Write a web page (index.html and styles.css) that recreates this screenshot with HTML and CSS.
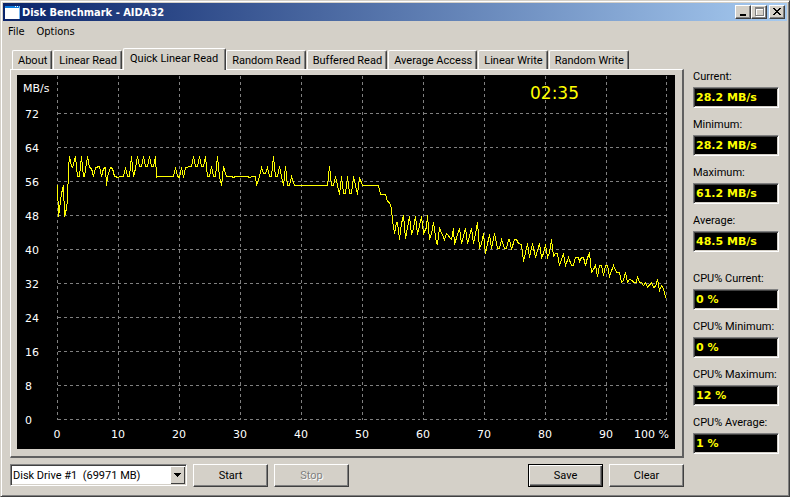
FILE: index.html
```
<!DOCTYPE html>
<html lang="en">
<head>
    <meta charset="UTF-8">
    <meta name="viewport" content="width=device-width, initial-scale=1.0">
    <title>Disk Benchmark - AIDA32</title>
    <link rel="stylesheet" href="styles.css">
</head>
<body>
    <div class="window">
        <header class="titlebar">
            <svg class="app-icon" width="15" height="13" viewBox="0 0 15 13" shape-rendering="crispEdges">
                <rect width="15" height="13" fill="#fff"/>
                <rect width="15" height="2" fill="#0a7be0"/>
                <rect x="10" width="1" height="1" fill="#fff"/>
                <rect x="12" width="1" height="1" fill="#fff"/>
                <rect x="14" width="1" height="13" fill="#7ab8f0"/>
            </svg>
            <h1>Disk Benchmark - AIDA32</h1>
            <div class="window-buttons">
                <button type="button" aria-label="Minimize">
                    <svg width="12" height="10" viewBox="0 0 12 10" shape-rendering="crispEdges">
                        <rect x="3" y="7" width="6" height="2" fill="#000"/>
                    </svg>
                </button>
                <button type="button" aria-label="Maximize" disabled>
                    <svg width="12" height="10" viewBox="0 0 12 10" shape-rendering="crispEdges">
                        <path d="M3 1h9v9H3zM4 3v6h7V3z" fill="#fff" fill-rule="evenodd"/>
                        <path d="M2 0h9v9H2zM3 2v6h7V2z" fill="#808080" fill-rule="evenodd"/>
                    </svg>
                </button>
                <button type="button" class="close" aria-label="Close">
                    <svg width="12" height="10" viewBox="0 0 12 10" shape-rendering="crispEdges">
                        <path d="M2 1h2v1h1v1h2V2h1V1h2v1H9v1H8v1H7v1h1v1h1v1h1v1H8V7H7V6H5v1H4v1H2V7h1V6h1V5h1V4H4V3H3V2H2z" fill="#000"/>
                    </svg>
                </button>
            </div>
        </header>

        <nav class="menu">
            <a href="#">File</a>
            <a href="#">Options</a>
        </nav>

        <div class="content">
            <main>
                <div class="tabs" role="tablist">
                    <button type="button" role="tab">About</button>
                    <button type="button" role="tab">Linear Read</button>
                    <button type="button" role="tab" class="active" aria-selected="true">Quick Linear Read</button>
                    <button type="button" role="tab">Random Read</button>
                    <button type="button" role="tab">Buffered Read</button>
                    <button type="button" role="tab">Average Access</button>
                    <button type="button" role="tab">Linear Write</button>
                    <button type="button" role="tab">Random Write</button>
                </div>

                <div class="panel">
                    <svg class="chart" viewBox="17 75 658 374">
                        <!-- Grid -->
                        <path class="grid" transform="translate(.5 .5)" d="
                            M57 75V419 M118 75V419 M179 75V419 M240 75V419 M301 75V419 M362 75V419
                            M423 75V419 M484 75V419 M545 75V419 M606 75V419 M666 75V419
                            M57 113H666 M57 147H666 M57 181H666 M57 215H666 M57 249H666
                            M57 283H666 M57 317H666 M57 351H666 M57 385H666 M57 419H666"/>

                        <!-- Transfer rate -->
                        <polyline class="rate" transform="translate(.5 .5)" points="
                            57,185 58,216 61,193 63,185 64,216 66,208 67,200 68,168 69,156 71,166 72,167 75,156
                            77,176 79,176 81,156 83,176 84,176 87,156 89,167 91,168 93,176 95,167 99,166 101,176
                            103,168 105,167 106,185 107,176 110,167 112,168 114,176 118,177 119,176 123,176
                            125,167 127,176 129,176 131,156 133,176 135,168 137,156 139,166 141,166 143,156
                            145,166 147,166 149,156 151,166 153,166 155,156 156,177 157,176 173,176 175,167
                            177,176 179,177 181,167 183,177 185,167 191,166 193,156 195,166 197,166 199,156
                            201,166 203,166 205,156 207,176 209,176 211,166 213,176 215,176 217,156 219,176
                            221,185 223,166 226,176 231,176 233,177 235,176 247,176 249,177 252,176 255,176
                            256,185 259,176 261,167 263,173 265,173 267,167 269,176 271,176 273,156 275,176
                            277,176 279,166 281,176 283,185 285,166 287,185 289,185 291,176 294,185 327,185
                            329,166 331,185 333,185 335,176 337,185 339,194 341,176 343,193 345,193 347,176
                            349,193 351,193 353,176 355,185 357,194 359,177 362,185 378,185 380,194 385,194
                            387,201 389,202 391,208 392,220 394,233 396,222 397,222 399,239 401,223 403,215
                            405,238 407,227 409,216 411,234 413,228 415,216 417,234 419,225 421,216 423,233
                            426,227 427,215 429,239 431,233 433,222 436,243 437,244 439,228 444,239 446,233
                            451,239 453,228 454,244 457,234 459,228 461,243 465,228 467,243 471,228 473,243
                            475,233 477,222 479,248 481,243 483,233 485,253 489,234 491,248 494,233 497,248
                            499,248 501,239 504,248 506,248 508,239 509,239 511,249 514,239 516,239 518,243
                            521,244 523,261 527,243 529,257 532,243 535,257 539,243 541,257 543,253 545,244
                            547,257 549,252 551,239 553,256 555,253 557,253 559,265 563,253 565,265 568,257
                            571,265 573,265 575,257 578,257 579,261 581,257 583,257 585,265 587,257 589,253
                            591,272 593,269 595,265 597,276 599,265 601,265 603,275 605,265 607,265 609,276
                            613,265 616,272 619,272 621,282 623,280 625,272 627,282 629,279 632,280 633,282
                            636,282 637,276 639,282 641,282 643,285 645,282 647,287 651,282 653,287 655,286
                            657,279 659,290 661,285 663,288 665,297 666,298"/>

                        <!-- Y axis -->
                        <text x="23" y="92">MB/s</text>
                        <text x="25" y="118">72</text>
                        <text x="25" y="152">64</text>
                        <text x="25" y="186">56</text>
                        <text x="25" y="220">48</text>
                        <text x="25" y="254">40</text>
                        <text x="25" y="288">32</text>
                        <text x="25" y="322">24</text>
                        <text x="25" y="356">16</text>
                        <text x="25" y="390">8</text>
                        <text x="25" y="424">0</text>

                        <!-- X axis -->
                        <g text-anchor="middle">
                            <text x="57" y="438">0</text>
                            <text x="118" y="438">10</text>
                            <text x="179" y="438">20</text>
                            <text x="240" y="438">30</text>
                            <text x="301" y="438">40</text>
                            <text x="362" y="438">50</text>
                            <text x="423" y="438">60</text>
                            <text x="484" y="438">70</text>
                            <text x="545" y="438">80</text>
                            <text x="606" y="438">90</text>
                        </g>
                        <text x="669" y="438" text-anchor="end">100 %</text>

                        <text class="timer" x="530" y="99">02:35</text>
                    </svg>
                </div>

                <form class="controls">
                    <div class="drive">
                        <select aria-label="Drive">
                            <option>Disk Drive #1&nbsp; (69971 MB)</option>
                        </select>
                        <svg class="arrow" width="15" height="18" viewBox="0 0 15 18" shape-rendering="crispEdges">
                            <path d="M4 7h7v1h-1v1H9v1H8v1H7v-1H6V9H5V8H4z" fill="#000"/>
                        </svg>
                    </div>
                    <button type="button" class="btn">Start</button>
                    <button type="button" class="btn" disabled>Stop</button>
                    <button type="button" class="btn default">Save</button>
                    <button type="button" class="btn">Clear</button>
                </form>
            </main>

            <aside class="stats">
                <div class="group">
                    <label for="cur">Current:</label>
                    <input type="text" id="cur" value="28.2 MB/s" readonly>
                    <label for="min">Minimum:</label>
                    <input type="text" id="min" value="28.2 MB/s" readonly>
                    <label for="max">Maximum:</label>
                    <input type="text" id="max" value="61.2 MB/s" readonly>
                    <label for="avg">Average:</label>
                    <input type="text" id="avg" value="48.5 MB/s" readonly>
                </div>
                <div class="group">
                    <label for="cpuCur">CPU% Current:</label>
                    <input type="text" id="cpuCur" value="0 %" readonly>
                    <label for="cpuMin">CPU% Minimum:</label>
                    <input type="text" id="cpuMin" value="0 %" readonly>
                    <label for="cpuMax">CPU% Maximum:</label>
                    <input type="text" id="cpuMax" value="12 %" readonly>
                    <label for="cpuAvg">CPU% Average:</label>
                    <input type="text" id="cpuAvg" value="1 %" readonly>
                </div>
            </aside>
        </div>
    </div>
</body>
</html>
```
FILE: styles.css
```
* {
    box-sizing: border-box;
}

body {
    margin: 0;
    background: #d4d0c8;
    font-family: Roboto, "Liberation Sans", Arial, sans-serif;
    font-size: 11px;
    color: #000;
}

button,
select,
input {
    font: inherit;
    color: inherit;
    margin: 0;
    border-radius: 0;
}

.window {
    min-height: 100vh;
    padding: 1px;
    border: 1px solid;
    border-color: #d4d0c8 #404040 #404040 #d4d0c8;
    box-shadow: inset 1px 1px #fff, inset -1px -1px #808080;
}

/* Title bar */
.titlebar {
    display: flex;
    align-items: center;
    height: 18px;
    margin: 1px 1px 0;
    padding: 0 2px;
    background: linear-gradient(to right, #0a246a, #a6caf0);
}

.titlebar h1 {
    flex: 1;
    margin: 0 0 0 2px;
    font-family: "DejaVu Sans Condensed", "DejaVu Sans", sans-serif;
    font-size: 11px;
    font-weight: bold;
    line-height: 18px;
    padding-top: 1px;
    color: #fff;
}

.window-buttons {
    display: flex;
}

.window-buttons button {
    width: 16px;
    height: 14px;
    padding: 1px;
    background: #d4d0c8;
    border: 1px solid;
    border-color: #fff #404040 #404040 #fff;
    box-shadow: inset -1px -1px #808080;
}

.window-buttons svg {
    display: block;
}

.window-buttons .close {
    margin-left: 2px;
}

/* Menu */
.menu {
    display: flex;
    gap: 12px;
    padding: 1px 6px 0;
    font-family: "DejaVu Sans Condensed", "DejaVu Sans", sans-serif;
    line-height: 20px;
}

.menu a {
    color: #000;
    text-decoration: none;
}

.content {
    display: flex;
    gap: 9px;
    padding: 6px 9px 8px 8px;
}

main {
    flex: 1;
    min-width: 0;
}

/* Tabs */
.tabs {
    display: flex;
    align-items: flex-end;
    height: 21px;
    padding-left: 2px;
}

.tabs button {
    height: 19px;
    margin-right: 1px;
    padding: 0 4px 0 5px;
    background: #d4d0c8;
    border: 1px solid;
    border-color: #fff #404040 transparent #fff;
    border-bottom: 0;
    border-radius: 2px 2px 0 0;
    box-shadow: inset -1px 0 #808080;
    white-space: nowrap;
}

.tabs .active {
    position: relative;
    height: 22px;
    margin: 0 0 -1px;
    padding: 0 7px 3px 6px;
}

.panel {
    padding: 5px 7px 7px 6px;
    border: 1px solid;
    border-color: #fff #606060 #606060 #fff;
    border-width: 1px 2px 2px 1px;
}

/* Chart */
.chart {
    display: block;
    width: 100%;
    background: #000;
    font-family: "DejaVu Sans", Verdana, sans-serif;
    font-size: 11px;
    fill: #fff;
}

.grid {
    fill: none;
    stroke: #808080;
    stroke-dasharray: 3 3;
    shape-rendering: crispEdges;
}

.rate {
    fill: none;
    stroke: #ff0;
    shape-rendering: crispEdges;
}

.timer {
    font-size: 17px;
    fill: #ff0;
}

/* Bottom controls */
.controls {
    display: flex;
    gap: 6px;
    margin-top: 6px;
}

.drive {
    position: relative;
    width: 177px;
    height: 22px;
}

.drive select {
    appearance: none;
    width: 100%;
    height: 100%;
    padding: 0 20px 0 2px;
    background: #fff;
    border: 1px solid;
    border-color: #808080 #fff #fff #808080;
    box-shadow: inset 1px 1px #404040, inset -1px -1px #d4d0c8;
    outline: 0;
}

.drive .arrow {
    position: absolute;
    top: 2px;
    right: 2px;
    background: #d4d0c8;
    box-shadow: inset 1px 1px #fff, inset -1px -1px #404040;
    pointer-events: none;
}

.btn {
    width: 75px;
    height: 23px;
    padding: 0;
    background: #d4d0c8;
    border: 1px solid;
    border-color: #fff #404040 #404040 #fff;
    box-shadow: inset -1px -1px #808080;
}

.btn:disabled {
    color: #808080;
    text-shadow: 1px 1px #fff;
}

.btn.default {
    margin-left: auto;
    border-color: #000;
    box-shadow: inset 1px 1px #fff, inset -1px -1px #404040, inset -2px -2px #808080;
}

/* Readouts */
.stats {
    width: 86px;
    padding-top: 21px;
}

.stats .group {
    display: flex;
    flex-direction: column;
    margin-bottom: 10px;
}

.stats label {
    line-height: 16px;
    margin-bottom: 2px;
    white-space: nowrap;
}

.stats input {
    width: 100%;
    height: 21px;
    margin-bottom: 9px;
    padding: 0 2px;
    background: #000;
    border: 1px solid;
    border-color: #808080 #fff #fff #808080;
    box-shadow: inset 1px 1px #404040, inset -1px -1px #d4d0c8;
    font-family: "DejaVu Sans", Verdana, sans-serif;
    font-weight: bold;
    color: #ff0;
    outline: 0;
}
```
